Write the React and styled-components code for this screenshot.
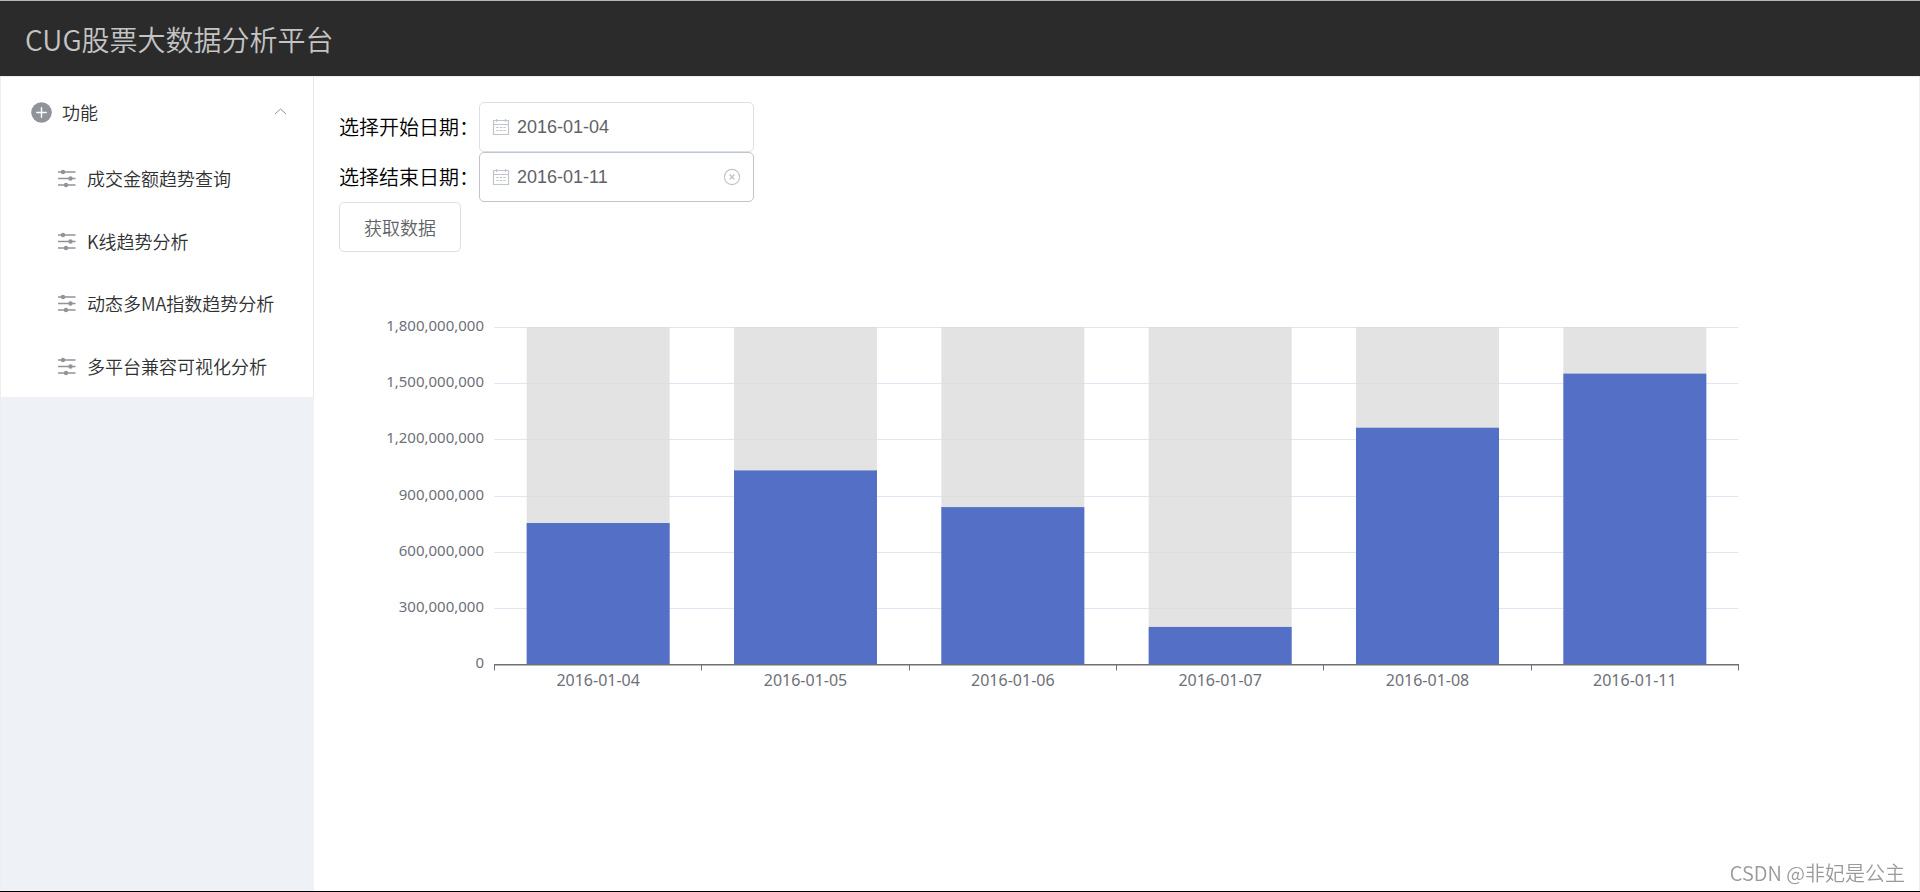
import React, { useState } from 'react';
import styled, { createGlobalStyle } from 'styled-components';

const GlobalStyle = createGlobalStyle`
  * {
    box-sizing: border-box;
  }

  body {
    margin: 0;
    background-color: #fff;
    color: #000;
    font-family: "Noto Sans CJK SC", sans-serif;
    font-weight: 350;
  }
`;

const Page = styled.div`
  display: flex;
  flex-direction: column;
  min-height: 100vh;
  border-top: 1px solid #b4b8b6;
  border-bottom: 1px solid #000;
`;

const Header = styled.header`
  display: flex;
  align-items: center;
  height: 75px;
  padding: 0 25px;
  background-color: #2b2b2b;
`;

const Title = styled.h1`
  margin: 0;
  color: #c4c4c4;
  font-size: 28px;
  font-weight: 350;
  line-height: 36px;
`;

const Body = styled.div`
  display: flex;
  flex: 1;
  border: 1px solid #eee;
  border-bottom: 0;
`;

const Aside = styled.aside`
  flex: 0 0 313px;
  background-color: #eef1f6;
`;

const Menu = styled.nav`
  border-right: 1px solid #e6e6e6;
  background-color: #fff;
  color: #303133;
  font-size: 18px;
`;

const MenuTitle = styled.button`
  display: flex;
  align-items: center;
  width: 100%;
  height: 70px;
  padding: 0 25px;
  border: 0;
  background: none;
  color: inherit;
  font: inherit;
  cursor: pointer;
`;

const MenuLabel = styled.span`
  flex: 1;
  text-align: left;
`;

const MenuList = styled.ul`
  display: grid;
  grid-template-rows: repeat(4, 1fr);
  height: 250px;
  margin: 0;
  padding: 0;
  list-style: none;
`;

const MenuLink = styled.a`
  display: flex;
  align-items: center;
  height: 100%;
  padding: 0 25px 0 50px;
  color: inherit;
  text-decoration: none;
  white-space: nowrap;
`;

const MenuIcon = styled.svg`
  flex: none;
  width: 30px;
  height: 24px;
  margin-right: 6px;
  color: #909399;
`;

const Arrow = styled.svg`
  width: 16px;
  height: 16px;
  color: #909399;
`;

const Main = styled.main`
  flex: 1;
  min-width: 0;
  padding: 25px;
`;

const Field = styled.div`
  display: flex;
  align-items: center;
`;

const FieldLabel = styled.label`
  width: 140px;
  font-size: 20px;
  line-height: 28px;
  white-space: nowrap;
`;

const DateBox = styled.div`
  display: flex;
  align-items: center;
  width: 275px;
  height: 50px;
  padding: 0 12px;
  border: 1px solid ${({ $active }) => ($active ? '#c0c4cc' : '#dcdfe6')};
  border-radius: 5px;
  color: #c0c4cc;
`;

const DateInput = styled.input`
  flex: 1;
  min-width: 0;
  margin: 0 7px;
  padding: 0;
  border: 0;
  outline: 0;
  background: none;
  color: #606266;
  font-family: "Liberation Sans", sans-serif;
  font-size: 18px;
  font-weight: 400;
`;

const ClearButton = styled.button`
  display: flex;
  padding: 0;
  border: 0;
  background: none;
  color: inherit;
  cursor: pointer;
`;

const Button = styled.button`
  display: block;
  height: 50px;
  padding: 0 24px;
  border: 1px solid #dcdfe6;
  border-radius: 5px;
  background-color: #fff;
  color: #606266;
  font-family: inherit;
  font-size: 18px;
  font-weight: 350;
  cursor: pointer;
`;

const Chart = styled.svg`
  display: block;
  width: 100%;
  height: auto;

  text {
    fill: #6e7079;
    font-family: "Noto Sans", sans-serif;
    font-weight: 400;
  }
`;

const Watermark = styled.div`
  position: fixed;
  right: 15px;
  bottom: 5px;
  color: #9a9a9a;
  font-size: 20px;
  line-height: 28px;
`;

const PlusIcon = () => (
  <MenuIcon viewBox="0 0 30 24" aria-hidden="true">
    <circle cx="15.5" cy="12.5" r="10.3" fill="currentColor" />
    <path d="M15.5 7.8v9.4M10.8 12.5h9.4" stroke="#fff" strokeWidth="1.4" strokeLinecap="round" />
  </MenuIcon>
);

const OperationIcon = () => (
  <MenuIcon viewBox="0 0 30 24" aria-hidden="true">
    <path d="M7 6h17.5M7 12.5h17.5M7 19h17.5" stroke="currentColor" strokeWidth="1.5" />
    <g fill="currentColor">
      <circle cx="12" cy="6" r="2.2" />
      <circle cx="19.5" cy="12.5" r="2.2" />
      <circle cx="15" cy="19" r="2.2" />
    </g>
  </MenuIcon>
);

const CalendarIcon = () => (
  <svg width="18" height="18" viewBox="0 0 18 18" fill="none" stroke="currentColor" aria-hidden="true">
    <path d="M1.5 2.5h15v14h-15zM1.5 6.5h15" strokeWidth="1.2" />
    <path d="M4.5 1v3M13.5 1v3" strokeWidth="1.2" />
    <path d="M4.3 9.5h2.4M7.8 9.5h2.4M11.3 9.5h2.4M4.3 12.5h2.4M7.8 12.5h2.4M11.3 12.5h2.4" strokeWidth="1.2" />
  </svg>
);

const ClearIcon = () => (
  <svg width="18" height="18" viewBox="0 0 18 18" fill="none" stroke="currentColor" aria-hidden="true">
    <circle cx="9" cy="9" r="7.6" strokeWidth="1.2" />
    <path d="M6.6 6.6l4.8 4.8M11.4 6.6l-4.8 4.8" strokeWidth="1.4" />
  </svg>
);

const menuItems = ['成交金额趋势查询', 'K线趋势分析', '动态多MA指数趋势分析', '多平台兼容可视化分析'];

const turnover = [
  { date: '2016-01-04', value: 753000000 },
  { date: '2016-01-05', value: 1034000000 },
  { date: '2016-01-06', value: 838000000 },
  { date: '2016-01-07', value: 198000000 },
  { date: '2016-01-08', value: 1262000000 },
  { date: '2016-01-11', value: 1551000000 },
];

const MAX = 1800000000;
const STEP = 300000000;
const LEFT = 155.5;
const RIGHT = 1399.5;
const TOP = 75;
const BOTTOM = 412;
const BAND = (RIGHT - LEFT) / turnover.length;
const BAR = 143;

const yOf = (value) => BOTTOM - (value / MAX) * (BOTTOM - TOP);

const BarChart = () => {
  const ticks = [];
  for (let v = 0; v <= MAX; v += STEP) ticks.push(v);

  return (
    <Chart viewBox="0 0 1555 500" role="img" aria-label="成交金额">
      {ticks.map((v) => (
        <g key={v}>
          {v > 0 && (
            <line x1={LEFT} x2={RIGHT} y1={Math.round(yOf(v)) + 0.5} y2={Math.round(yOf(v)) + 0.5} stroke="#e0e6f1" />
          )}
          <text x="145" y={yOf(v) + 4} fontSize="15" textAnchor="end">{v.toLocaleString('en-US')}</text>
        </g>
      ))}
      {turnover.map(({ date, value }, i) => {
        const x = LEFT + BAND * i + (BAND - BAR) / 2;
        return (
          <g key={date}>
            <rect x={x} y={TOP} width={BAR} height={BOTTOM - TOP} fill="rgba(220, 220, 220, 0.8)" />
            <rect x={x} y={yOf(value)} width={BAR} height={BOTTOM - yOf(value)} fill="#5470c6" />
            <text x={x + BAR / 2} y="434" fontSize="16" textAnchor="middle">{date}</text>
          </g>
        );
      })}
      <path d={`M${LEFT - 0.5} ${BOTTOM + 0.8}H${RIGHT + 0.5}`} stroke="#6e7079" strokeWidth="1.5" />
      {[...turnover, null].map((_, i) => {
        const x = Math.floor(LEFT + BAND * i) + 0.5;
        return <path key={i} d={`M${x} ${BOTTOM}v6.5`} stroke="#6e7079" />;
      })}
    </Chart>
  );
};

const DateField = ({ id, label, value, onChange, active, onClear }) => (
  <Field>
    <FieldLabel htmlFor={id}>{label}</FieldLabel>
    <DateBox $active={active}>
      <CalendarIcon />
      <DateInput id={id} type="text" value={value} onChange={(e) => onChange(e.target.value)} />
      {active && (
        <ClearButton type="button" aria-label="清除" onClick={onClear}>
          <ClearIcon />
        </ClearButton>
      )}
    </DateBox>
  </Field>
);

const App = () => {
  const [start, setStart] = useState('2016-01-04');
  const [end, setEnd] = useState('2016-01-11');
  const [open, setOpen] = useState(true);

  return (
    <Page>
      <GlobalStyle />
      <Header>
        <Title>CUG股票大数据分析平台</Title>
      </Header>
      <Body>
        <Aside>
          <Menu>
            <MenuTitle type="button" aria-expanded={open} onClick={() => setOpen(!open)}>
              <PlusIcon />
              <MenuLabel>功能</MenuLabel>
              <Arrow viewBox="0 0 16 16" aria-hidden="true">
                <path d="M3 10l5.5-5 5.5 5" fill="none" stroke="currentColor" strokeWidth="1" />
              </Arrow>
            </MenuTitle>
            {open && (
              <MenuList>
                {menuItems.map((item) => (
                  <li key={item}>
                    <MenuLink href="#">
                      <OperationIcon />
                      {item}
                    </MenuLink>
                  </li>
                ))}
              </MenuList>
            )}
          </Menu>
        </Aside>
        <Main>
          <DateField id="start" label="选择开始日期：" value={start} onChange={setStart} />
          <DateField id="end" label="选择结束日期：" value={end} onChange={setEnd} active onClear={() => setEnd('')} />
          <Button type="button">获取数据</Button>
          <BarChart />
        </Main>
      </Body>
      <Watermark>CSDN @非妃是公主</Watermark>
    </Page>
  );
};

export default App;
